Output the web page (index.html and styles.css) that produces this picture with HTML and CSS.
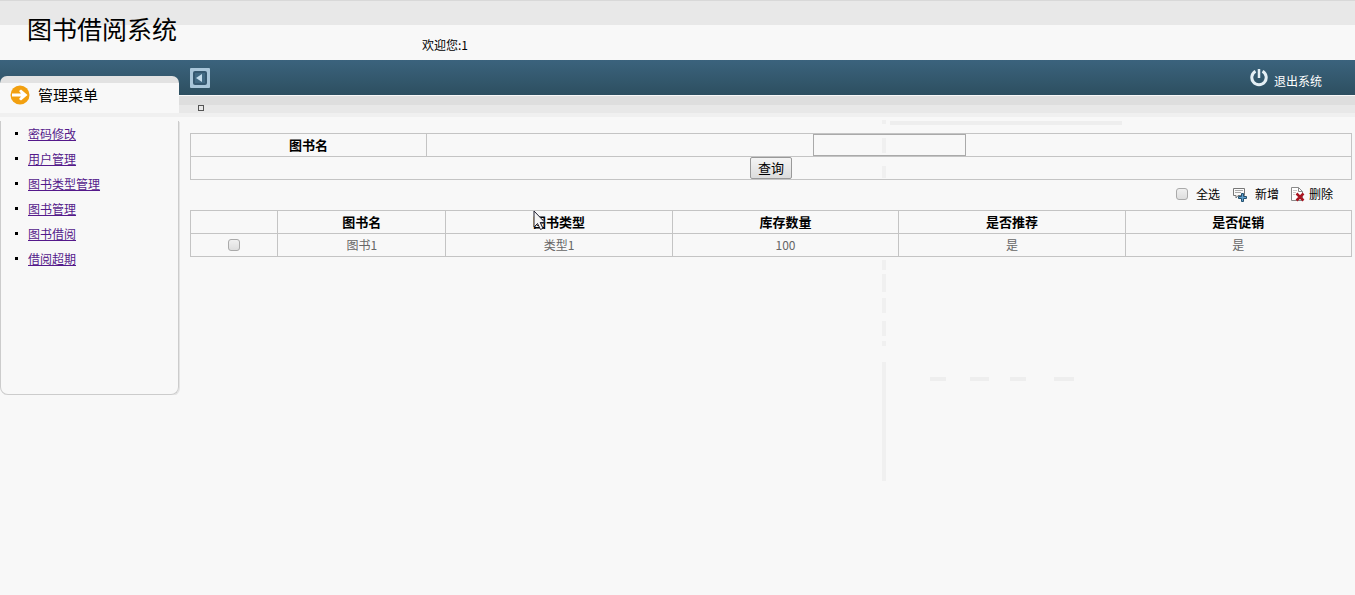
FILE: index.html
```
<!DOCTYPE html>
<html lang="zh-CN">
<head>
  <meta charset="UTF-8">
  <title>图书借阅系统</title>
  <link rel="stylesheet" href="styles.css">
</head>
<body>
  <header class="header">
    <h1>图书借阅系统</h1>
    <p class="welcome">欢迎您:1</p>
  </header>

  <div class="frame">
    <aside class="sidebar">
      <h2 class="menu-title">
        <svg width="20" height="20" viewBox="0 0 20 20">
          <circle cx="10" cy="10" r="9.5" fill="#f2a010"/>
          <path d="M2 8.500h9l-2-2.500 2-1.500 6.500 5.500-6.500 5.500-2-1.500 2-2.500H2z" fill="#fff"/>
        </svg>
        管理菜单
      </h2>
      <ul class="menu">
        <li><a href="#">密码修改</a></li>
        <li><a href="#">用户管理</a></li>
        <li><a href="#">图书类型管理</a></li>
        <li><a href="#">图书管理</a></li>
        <li><a href="#">图书借阅</a></li>
        <li><a href="#">借阅超期</a></li>
      </ul>
    </aside>

    <main class="main">
      <div class="topbar">
        <button type="button" class="toggle" aria-label="收起菜单">
          <svg width="20" height="20" viewBox="0 0 20 20">
            <rect width="20" height="20" rx="1" fill="#a9c6da"/>
            <rect x="3" y="3" width="14" height="14" rx="2" fill="#355870"/>
            <rect x="5" y="5" width="10" height="10" fill="#426a84"/>
            <path d="M12 6v8l-6-4z" fill="#c3dcec"/>
          </svg>
        </button>
        <a class="logout" href="#">
          <svg width="18" height="20" viewBox="0 0 18 20">
            <path d="M5.500 3.200A7.200 7.200 0 1 0 12.500 3.200" fill="none" stroke="#e4eff5" stroke-width="3"/>
            <path d="M9 1v9" stroke="#e4eff5" stroke-width="2.500"/>
          </svg>
          退出系统
        </a>
      </div>
      <div class="strip"><span class="marker"></span></div>

      <div class="content">
        <form>
          <table class="grid search">
            <colgroup><col class="col-label"><col></colgroup>
            <tr>
              <th><label for="bookName">图书名</label></th>
              <td><input type="text" id="bookName" class="text"></td>
            </tr>
            <tr>
              <td colspan="2"><button type="submit" class="btn">查询</button></td>
            </tr>
          </table>
        </form>

        <div class="tools">
          <label class="tool all"><input type="checkbox" class="check">全选</label>
          <a class="tool add" href="#">
            <svg width="15" height="15" viewBox="0 0 15 15">
              <path d="M1.500 1.500h11v7H6l-2 2.500v-2.500H1.500z" fill="#fafafa" stroke="#777"/>
              <path d="M3 3.500h8M3 5.500h6" stroke="#aaa"/>
              <path d="M9.500 6.500h2v3h3v2h-3v3h-2v-3h-3v-2h3z" fill="#5f9fcd" stroke="#23506f"/>
            </svg>
            新增
          </a>
          <a class="tool del" href="#">
            <svg width="15" height="15" viewBox="0 0 15 15">
              <path d="M.5.5h7l4 4v9H.5z" fill="#fff" stroke="#8a8a8a"/>
              <path d="M7.500.5v4h4" fill="none" stroke="#8a8a8a"/>
              <path d="M2 3.500h4M2 5.500h3M2 7.500h2" stroke="#ccc"/>
              <path d="M5.500 6.500l7 7M12.500 6.500l-7 7" stroke="#a91521" stroke-width="2.500"/>
            </svg>
            删除
          </a>
        </div>

        <table class="grid list">
          <colgroup><col class="col-check"><col class="col-name"><col><col><col><col></colgroup>
          <thead>
            <tr>
              <th></th>
              <th>图书名</th>
              <th>图书类型</th>
              <th>库存数量</th>
              <th>是否推荐</th>
              <th>是否促销</th>
            </tr>
          </thead>
          <tbody>
            <tr>
              <td><input type="checkbox" class="check" aria-label="图书1"></td>
              <td>图书1</td>
              <td>类型1</td>
              <td>100</td>
              <td>是</td>
              <td>是</td>
            </tr>
          </tbody>
        </table>
      </div>
    </main>
  </div>

  <svg class="marks" width="260" height="370" viewBox="0 0 260 370">
    <path d="M20 3h232" stroke="#eee" stroke-width="4"/>
    <path d="M14 0v4M14 18v15M14 46v12M14 140v10M14 154v18M14 178v15M14 201v15M14 221v5M14 242v119" stroke="#f0f0f0" stroke-width="4"/>
    <path d="M60 259h16M100 259h19M140 259h16M184 259h20" stroke="#eee" stroke-width="4"/>
  </svg>
  <svg class="cursor" width="13" height="21" viewBox="0 0 13 21">
    <path d="M1 1v16l3.500-3.500 3 6 2.500-1.200-2.800-5.800H12z" fill="#f4f4f4" stroke="#223" stroke-width="1"/>
  </svg>
</body>
</html>
```
FILE: styles.css
```
* {
  box-sizing: border-box;
}

body {
  margin: 0;
  background-color: #f8f8f8;
  color: #000;
  font-family: "Noto Sans CJK SC", sans-serif;
  font-size: 12px;
  line-height: 20px;
}

h1, h2, p, ul {
  margin: 0;
  padding: 0;
}

svg {
  display: block;
}

/* header */
.header {
  display: flex;
  height: 60px;
  border-top: 1px solid #d8d8d8;
  background: linear-gradient(#e8e8e8 24px, #f8f8f8 24px);
}

h1 {
  width: 422px;
  padding: 11px 0 0 27px;
  font-size: 25px;
  font-weight: 400;
  line-height: 32px;
}

.welcome {
  padding-top: 34px;
}

/* the blue bar and grey strip run behind the sidebar */
.frame {
  display: flex;
  background:
    linear-gradient(#3b637d, #2d4f60) 0 0 / 100% 35px no-repeat,
    linear-gradient(#f8f8f8 1px, #dedede 1px, #dedede 10px, #e8e8e8 10px, #e8e8e8 18px, #f0f0f0 18px) 0 35px / 100% 22px no-repeat;
}

.sidebar {
  width: 180px;
  flex: none;
  padding-top: 16px;
}

.menu-title {
  display: flex;
  align-items: center;
  gap: 8px;
  height: 37px;
  margin-right: 1px;
  padding-left: 10px;
  border-radius: 7px 7px 0 0;
  background: linear-gradient(#e2e2e2 7px, #f8f8f8 7px);
  font-size: 15px;
  font-weight: 400;
}

.menu {
  height: 274px;
  margin: 8px 1px 0 0;
  padding-left: 14px;
  border: 1px solid #ccc;
  border-top: 0;
  border-radius: 0 0 8px 8px;
  box-shadow: 1px 1px 0 #e4e4e4;
  list-style: none;
  line-height: 25px;
}

.menu li {
  display: flex;
  align-items: center;
  gap: 10px;
}

.menu li::before {
  content: "";
  width: 3px;
  height: 3px;
  background-color: #000;
}

.menu a {
  color: #551a8b;
}

/* main */
.main {
  flex: 1;
}

.topbar {
  display: flex;
  justify-content: space-between;
  height: 35px;
  padding: 8px 33px 0 10px;
}

.toggle {
  width: 20px;
  height: 20px;
  padding: 0;
  border: 0;
  background: none;
}

.logout {
  display: flex;
  gap: 6px;
  color: #fff;
  line-height: 26px;
  text-decoration: none;
}

.strip {
  height: 22px;
  padding: 10px 0 0 18px;
}

.marker {
  display: block;
  width: 6px;
  height: 6px;
  border: 1px solid #555;
}

.content {
  padding: 16px 3px 0 10px;
}

.grid {
  width: 100%;
  border-collapse: collapse;
  table-layout: fixed;
}

.grid th, .grid td {
  height: 23px;
  padding: 0;
  border: 1px solid #c4c4c4;
  line-height: 22px;
  text-align: center;
}

.grid th {
  font-size: 13px;
}

.grid td {
  color: #666;
}

.col-label {
  width: 236px;
}

.col-check {
  width: 7.5%;
}

.col-name {
  width: 14.5%;
}

.text {
  display: block;
  width: 153px;
  height: 22px;
  margin: 0 auto;
  border: 1px solid #aaa;
  background-color: #f8f8f8;
}

.btn {
  display: block;
  width: 42px;
  height: 22px;
  margin: 0 auto;
  padding: 0;
  border: 1px solid #999;
  border-radius: 2px;
  background: linear-gradient(#f4f4f4, #dcdcdc);
  color: #000;
  font-family: inherit;
  font-size: 13px;
  line-height: 20px;
}

.check {
  appearance: none;
  width: 12px;
  height: 12px;
  margin: 0;
  border: 1px solid #aaa;
  border-radius: 3px;
  background: linear-gradient(#f0f0f0, #dedede);
}

.grid .check {
  display: block;
  margin: 0 auto;
}

/* toolbar */
.tools {
  display: flex;
  justify-content: flex-end;
  gap: 12px;
  height: 30px;
  padding: 0 19px 2px 0;
}

.tool {
  display: flex;
  align-items: center;
  gap: 8px;
  color: #000;
  text-decoration: none;
}

.del {
  gap: 3px;
}

/* overlays */
.marks {
  position: absolute;
  top: 120px;
  left: 870px;
  pointer-events: none;
}

.cursor {
  position: absolute;
  top: 210px;
  left: 533px;
  pointer-events: none;
}
```
